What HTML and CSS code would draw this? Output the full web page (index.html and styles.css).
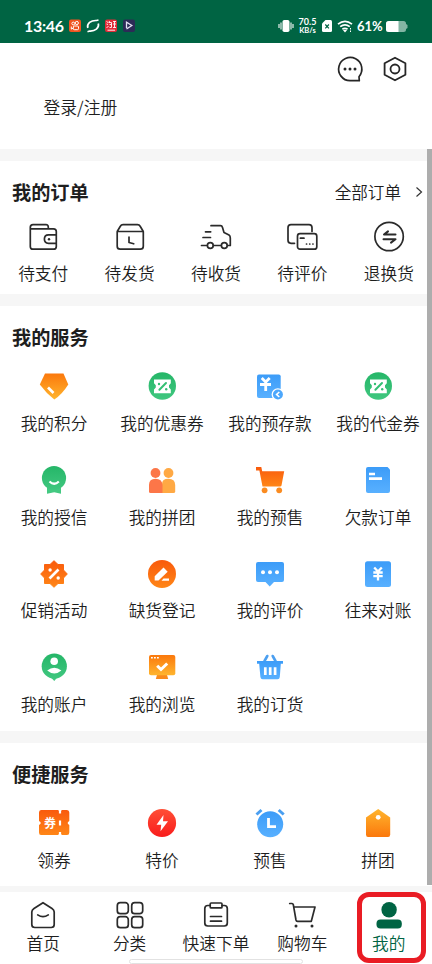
FILE: index.html
```html
<!DOCTYPE html>
<html lang="zh-CN">
<head>
<meta charset="utf-8">
<meta name="viewport" content="width=device-width, initial-scale=1">
<title>我的</title>
<link rel="stylesheet" href="styles.css">
</head>
<body>
<svg class="defs" aria-hidden="true">
  <defs>
    <linearGradient id="orange" x1="0" y1="0" x2="0" y2="1"><stop offset="0" stop-color="#f95a0c"/><stop offset="1" stop-color="#ff8617"/></linearGradient>
    <linearGradient id="amber" x1="0" y1="0" x2="0" y2="1"><stop offset="0" stop-color="#fb780c"/><stop offset="1" stop-color="#ffb52e"/></linearGradient>
    <linearGradient id="tag" x1="0" y1="0" x2="0" y2="1"><stop offset="0" stop-color="#ffb52e"/><stop offset="1" stop-color="#fb780c"/></linearGradient>
    <linearGradient id="blue" x1="0" y1="0" x2="0" y2="1"><stop offset="0" stop-color="#3c9cf8"/><stop offset="1" stop-color="#58b0ff"/></linearGradient>
    <linearGradient id="green" x1="0" y1="0" x2="0" y2="1"><stop offset="0" stop-color="#25b668"/><stop offset="1" stop-color="#40c77f"/></linearGradient>
    <linearGradient id="red" x1="0" y1="0" x2="0" y2="1"><stop offset="0" stop-color="#ff4f36"/><stop offset="1" stop-color="#f91c1c"/></linearGradient>
    <symbol id="coupon" viewBox="-18 -18 36 36">
      <circle cx=".3" cy="0" r="13.7" fill="url(#green)"/>
      <path d="M-8-6.5H8.800V-2.700L7-.8V1.500L8.800 3.400V7.300H-8V3.400L-6.200 1.500V-.8L-8-2.700Z" fill="#fff"/>
      <path d="M-2.600 3.800 4-3" stroke="#35bf74" stroke-width="2" stroke-linecap="round"/>
      <circle cx="-3" cy="-2" r="1.200" fill="#35bf74"/><circle cx="4.200" cy="3.200" r="1.200" fill="#35bf74"/>
    </symbol>
  </defs>
</svg>
<div class="screen">
  <header class="status">
    <div class="status-left">
      <span class="clock">13:46</span>
      <svg class="notices" viewBox="0 0 66 14">
        <rect width="12" height="12.5" y=".5" rx="2" fill="#ef5420"/>
        <g fill="none" stroke="#fff" stroke-width="1"><circle cx="4.3" cy="4.5" r="1.4"/><circle cx="7.8" cy="4" r="1.6"/><rect x="4.3" y="7" width="5.2" height="3.7" rx="1"/><path d="M2.3 7.5v2.6l2-1"/></g>
        <path d="M18.800 9C17.500 4.500 22 1.200 27.500 1.500L29.500 1M29.300 4.500C30.500 9 26 12.400 20.500 12L18.500 12.700" fill="none" stroke="#fff" stroke-width="1.700"/>
        <rect x="36" y=".5" width="12" height="12.5" rx="2" fill="#e12c39"/>
        <path d="M37.500 2.500 39 3.500M37.500 5 39 5.500M37.500 9 39.500 7M40.500 2 39.800 4M40 3.500H42.500V8.500H40.500M40.500 5.500H42.500M44 2.500H47M44 5H47M45.500 2V8.500M44 8.500H47M38.500 11.200H46" fill="none" stroke="#fff" stroke-width=".9"/>
        <rect x="54" y=".5" width="12" height="12.5" rx="2" fill="#2c2b57"/>
        <path d="M57.500 9V3.200L62.800 6.500 57.500 10" fill="none" stroke="#e4e2f4" stroke-width="1.300"/>
      </svg>
    </div>
    <div class="status-right">
      <svg class="vibrate" viewBox="0 0 16 14"><path d="M1 5v4M3 3.500v7M15 5v4M13 3.500v7" stroke="#fff" stroke-width="1.100"/><rect x="4.500" y="1" width="7" height="12" rx="1.800" fill="#fff"/></svg>
      <span class="speed"><span>70.5</span><span class="unit">KB/s</span></span>
      <svg class="sim" viewBox="0 0 10 12"><path d="M3.500 0H8.500Q10 0 10 1.500V10.500Q10 12 8.500 12H1.500Q0 12 0 10.500V3.500Z" fill="#fff"/><path d="m3.300 4.500 3.600 3.800m0-3.800L3.300 8.300" stroke="#006443" stroke-width="1.200"/></svg>
      <svg class="wifi" viewBox="0 0 16 13"><g fill="none" stroke="#fff" stroke-width="1.700"><path d="M1 4.200Q8-1.500 15 4.200M3.200 6.700Q8 3 12.800 6.700M5.400 9.200Q8 7.300 10.500 9.200"/></g><path d="m6 10.200 2 2.300 2-2.300Q8 9 6 10.200Z" fill="#fff"/><path d="M13.500 8v4" stroke="#fff" stroke-dasharray="1.500 1"/></svg>
      <span class="percent">61%</span>
      <svg class="battery" viewBox="0 0 22 11"><path d="M3 0H17.500Q20 0 20 2.500V3L21.500 4V7L20 8V8.500Q20 11 17.500 11H3Q0 11 0 8.500V2.500Q0 0 3 0Z" fill="#83b6a4"/><path d="M12.500 0V11H3Q0 11 0 8.500V2.500Q0 0 3 0Z" fill="#fff"/></svg>
    </div>
  </header>

  <section class="account">
    <div class="tools">
      <svg class="tool" viewBox="-14 -14 28 28" fill="none" stroke="#262626" stroke-width="1.700"><path d="M9 7.700A11.600 11.600 0 1 0 0 11.700H9.300Z" stroke-linejoin="round"/><g fill="#262626" stroke="none"><circle cx="-5" cy="0" r="1.500"/><circle r="1.500"/><circle cx="5" r="1.500"/></g></svg>
      <svg class="tool" viewBox="-14 -14 28 28" fill="none" stroke="#262626" stroke-width="1.800" stroke-linejoin="round"><path d="M0-11.300 10.400-5.700V5.700L0 11.300-10.400 5.700V-5.700Z"/><circle r="4.500"/></svg>
    </div>
    <a class="login">登录/注册</a>
  </section>

  <section class="orders">
    <div class="heading"><h2>我的订单</h2><a class="all">全部订单<svg viewBox="0 0 8 12"><path d="m1.500 1.500 5 4.500-5 4.500" fill="none" stroke="#333" stroke-width="1.200"/></svg></a></div>
    <div class="order-row">
      <a class="item"><svg class="icon line" viewBox="-18 -18 36 36"><path d="M-12.700-8.200V-9.500Q-12.700-12.300-10-12.300H3Q5.300-12.300 5.300-10V-8M-12.700-8.200H10.500Q13.300-8.200 13.300-5.400V9.400Q13.300 12.200 10.500 12.200H-10Q-12.700 12.200-12.700 9.400V-8.200M13.300-2.200H5.500Q1.400-2.200 1.400 2.100T5.500 6.400H13.300"/><circle cx="6" cy="2.200" r="1.200" class="dot"/></svg><span>待支付</span></a>
      <a class="item"><svg class="icon line" viewBox="-18 -18 36 36"><path d="M-12.800-5.500H13.300V9.200Q13.300 12.200 10.300 12.200H-9.800Q-12.800 12.200-12.800 9.200ZM-12.800-5.500-9.500-11Q-8.800-12.300-7-12.300H7.500Q9.300-12.300 10-11L13.300-5.500M-1 0V5.500L3.700 6.800"/></svg><span>待发货</span></a>
      <a class="item"><svg class="icon line" viewBox="-18 -18 36 36"><path d="M-5-11.300H4.500Q6-11.300 6.500-9.500L8-4.500 13-2Q14.300-1.200 14.300 1V8.500H11.700M-10.500-5.200H-5.300M-13 .5H-5.500M-14.500 8.500H-9M-2.500 8.500H5"/><circle cx="-5.700" cy="8.500" r="2.900"/><circle cx="8.300" cy="8.500" r="2.900"/></svg><span>待收货</span></a>
      <a class="item"><svg class="icon line" viewBox="-18 -18 36 36"><path d="M-7.500 6.300H-11Q-14 6.300-14 3.300V-9.300Q-14-12.300-11-12.300H7Q10-12.300 10-9.300V-5.500"/><rect x="-4.500" y="-3.300" width="19.300" height="15.500" rx="2.500"/><path d="M-1.600 1.200H2"/><path d="M4.500 7h.1M7.700 7h.1M10.900 7h.1"/></svg><span>待评价</span></a>
      <a class="item"><svg class="icon line" viewBox="-18 -18 36 36"><circle cx=".1" cy="-.5" r="14.200"/><path d="M6.500-2.400H-5L-1-5.600M-5.500 2.300H6.500L2 5.600" stroke-width="2"/></svg><span>退换货</span></a>
    </div>
  </section>

  <section class="services">
    <div class="heading"><h2>我的服务</h2></div>
    <div class="service-grid">
      <a class="item"><svg class="icon" viewBox="-18 -18 36 36"><path d="M-9-12.500H9.500L14.300-1.500Q8 8.500 .3 13.500-8 7-14.200-1.500Z" fill="url(#amber)"/><path d="m-6 1.500 5.500 5.500" stroke="#fff" stroke-width="2.700"/></svg><span>我的积分</span></a>
      <a class="item"><svg class="icon"><use href="#coupon"/></svg><span>我的优惠券</span></a>
      <a class="item"><svg class="icon" viewBox="-18 -18 36 36"><rect x="-13" y="-11.500" width="23.700" height="23.500" rx="2" fill="url(#blue)"/><path d="m-8.300-8 4 4 4-4M-4.300-4V5M-10-1.500H1" stroke="#fff" stroke-width="2.800" fill="none"/><circle cx="7.900" cy="8.500" r="6.300" fill="#fff"/><circle cx="7.900" cy="8.500" r="5" fill="#4ca7fc"/><path d="M9.300 6 6.600 8.500 9.300 11" fill="none" stroke="#fff" stroke-width="1.600"/></svg><span>我的预存款</span></a>
      <a class="item"><svg class="icon"><use href="#coupon"/></svg><span>我的代金券</span></a>

      <a class="item"><svg class="icon" viewBox="-18 -18 36 36"><path d="M-7 7V13.800L.2 12.300 7 13.800V7Z" fill="#43c981"/><circle cy="-2" r="12.100" fill="url(#green)"/><path d="M-4.500 1.500Q.2 6 4.800 1.500" fill="none" stroke="#fff" stroke-width="2.200"/></svg><span>我的授信</span></a>
      <a class="item"><svg class="icon" viewBox="-18 -18 36 36"><g fill="#ffa944"><circle cx="6.500" cy="-7" r="4.900"/><path d="M0 13V4Q0-1.300 6.500-1.300T13.200 5V11.500Q13.200 13 11.500 13Z"/></g><g fill="#fc7648"><circle cx="-6.500" cy="-7" r="4.900"/><path d="M-13 11.500V5Q-13-1.300-6.500-1.300T.5 5V13H-11.500Q-13 13-13 11.500Z"/></g></svg><span>我的拼团</span></a>
      <a class="item"><svg class="icon" viewBox="-18 -18 36 36"><path d="M-14-13H-8.700L-7.800-8.800H14.200L11.500 5.500Q11.300 6.500 10 6.500H-7.500L-10.600-9.500H-14Z" fill="url(#orange)"/><circle cx="-5.400" cy="10.300" r="2.900" fill="#fa8b20"/><circle cx="9.200" cy="10.300" r="2.900" fill="#fa8b20"/></svg><span>我的预售</span></a>
      <a class="item"><svg class="icon" viewBox="-18 -18 36 36"><path d="M-10-13H9.500L12-10.500V11Q12 13 10 13H-10Q-12 13-12 11V-11Q-12-13-10-13Z" fill="url(#blue)"/><path d="M-9-6H-3M-9-1.400H4" stroke="#fff" stroke-width="2.600"/></svg><span>欠款订单</span></a>

      <a class="item"><svg class="icon" viewBox="-18 -18 36 36"><path d="M0-13.300 4-9.500H9.500V-4L13.300 0 9.500 4V9.500H4L0 13.300-4 9.500H-9.500V4L-13.300 0-9.500-4V-9.500H-4Z" fill="url(#orange)" stroke="url(#orange)" stroke-linejoin="round"/><path d="M-4.500 4.500 4.500-4.500" stroke="#fff" stroke-width="2.600"/><circle cx="-3.900" cy="-4" r="1.700" fill="#fff"/><circle cx="4.200" cy="4" r="1.700" fill="#fff"/></svg><span>促销活动</span></a>
      <a class="item"><svg class="icon" viewBox="-18 -18 36 36"><circle r="14" fill="url(#orange)"/><path d="M-7.300 2.200 1.500-6.500 5.700-2.300-3.500 6.500H-7.300Z" fill="#fff"/><path d="M-.5 6.700 1.500 4.500H7V6.700Z" fill="#fff"/></svg><span>缺货登记</span></a>
      <a class="item"><svg class="icon" viewBox="-18 -18 36 36"><path d="M-12-12H12Q14-12 14-10V6Q14 8 12 8H4L-.3 12.500-4.500 8H-12Q-14 8-14 6V-10Q-14-12-12-12Z" fill="url(#blue)"/><g fill="#fff"><circle cx="-7" cy="-1.800" r="2"/><circle cy="-1.800" r="2"/><circle cx="7" cy="-1.800" r="2"/></g></svg><span>我的评价</span></a>
      <a class="item"><svg class="icon" viewBox="-18 -18 36 36"><rect x="-13" y="-12.700" width="26" height="25.700" rx="2.500" fill="url(#blue)"/><path d="m-3.800-6.500 3.800 4 3.800-4M0-2.500V6.500M-4.700-1.500H4.700M-4.700 2.200H4.700" fill="none" stroke="#fff" stroke-width="2.300"/></svg><span>往来对账</span></a>

      <a class="item"><svg class="icon" viewBox="-18 -18 36 36"><path d="M-4 9.500H4L.3 14Z" fill="#43c981"/><circle cx=".3" cy="-.8" r="12.600" fill="url(#green)"/><circle cx=".2" cy="-5.800" r="3.800" fill="#fff"/><path d="M-6.800 3.500Q.2-2 7.400 3.500 .3 9.500-6.800 3.500Z" fill="#fff"/></svg><span>我的账户</span></a>
      <a class="item"><svg class="icon" viewBox="-18 -18 36 36"><path d="M-5 8H5L6.200 12H-6.200Z" fill="#fa8a1c"/><rect x="-13" y="-12" width="26.300" height="20.300" rx="2" fill="url(#amber)"/><path d="M-11-9.300H-3" stroke="#fff" stroke-width="1.600" stroke-dasharray="1.800 1.200"/><path d="M-4.800-1.300-1 2.500 5.200-3.500" fill="none" stroke="#fff" stroke-width="3"/></svg><span>我的浏览</span></a>
      <a class="item"><svg class="icon" viewBox="-18 -18 36 36"><path d="m-5.500-6 2.800-5M5.500-6 2.700-11" stroke="#4b9ff0" stroke-width="2.600" stroke-linecap="round"/><path d="M-13-6H13V-3.300H10.800L9.800 10Q9.600 12.300 7.500 12.300H-7.300Q-9.400 12.300-9.600 10L-10.800-3.300H-13Z" fill="url(#blue)"/><path d="M-4.700 .3V8M.2 .3V8M5.100 .3V8" stroke="#fff" stroke-width="2.700"/></svg><span>我的订货</span></a>
    </div>
  </section>

  <section class="quick">
    <div class="heading"><h2>便捷服务</h2></div>
    <div class="service-grid">
      <a class="item"><svg class="icon" viewBox="-18 -18 36 36"><path d="M-13-13H4.200Q6-9.500 7.800-13H13Q15.300-13 15.300-10.500V-2Q12 0 15.300 2V9.500Q15.300 12 13 12H7.800Q6 8.500 4.200 12H-13Q-15 12-15 9.500V2Q-11.500 0-15-2V-10.500Q-15-13-13-13Z" fill="url(#orange)"/><path d="M6-12V-9.500M6-2.500V2.500M6 9V12" stroke="#fff" stroke-width="2.200"/><text x="-4" y="4.700" class="coupon-text">券</text></svg><span>领券</span></a>
      <a class="item"><svg class="icon" viewBox="-18 -18 36 36"><circle r="14.100" fill="url(#red)"/><path d="M1.500-8-5.500 1.800H-.8L-1.500 8.300 6-1.700H1Z" fill="#fff"/></svg><span>特价</span></a>
      <a class="item"><svg class="icon" viewBox="-18 -18 36 36"><circle cx=".2" cy="1.300" r="13" fill="url(#blue)"/><path d="m-13.500-8.500 5-4.500M13.700-8.500l-5-4.500" stroke="#4b9ff0" stroke-width="3"/><path d="M-1.500-5V3.600H6" fill="none" stroke="#fff" stroke-width="2.800"/></svg><span>预售</span></a>
      <a class="item"><svg class="icon" viewBox="-18 -18 36 36"><path d="M.2-14 12.200-5.500V11.500Q12.200 14 10 14H-10Q-12 14-12 11.500V-5.500Z" fill="url(#tag)"/><circle cx=".2" cy="-5.700" r="2.400" fill="#fff"/></svg><span>拼团</span></a>
    </div>
  </section>

  <nav class="tabs">
    <a class="tab"><svg class="icon line" viewBox="-18 -18 36 36"><path d="M0-12.300 9-6.500Q11.200-5 11.200-3V9.500Q11.200 12.500 8.200 12.500H-8.200Q-11.200 12.500-11.200 9.500V-3Q-11.200-5-9-6.500ZM-5.300-.1Q0 3.500 5.300-.1"/></svg><span>首页</span></a>
    <a class="tab"><svg class="icon line" viewBox="-18 -18 36 36"><rect x="-12.700" y="-12.300" width="11" height="11" rx="3"/><rect x="1.700" y="-12.300" width="11" height="11" rx="3"/><rect x="-12.700" y="1.700" width="11" height="11" rx="3"/><rect x="1.700" y="1.700" width="11" height="11" rx="3"/></svg><span>分类</span></a>
    <a class="tab"><svg class="icon line" viewBox="-18 -18 36 36"><path d="M-5.800-9.500H-8.200Q-11.200-9.500-11.200-6.500V8Q-11.200 11-8.200 11H8.300Q11.300 11 11.300 8V-6.500Q11.300-9.500 8.300-9.500H6M-5.500 1.500H5.500M-5.500 6.200H5.500"/><rect x="-5.800" y="-12" width="11.800" height="4.900" rx="1"/></svg><span>快速下单</span></a>
    <a class="tab"><svg class="icon line" viewBox="-18 -18 36 36"><path d="M-12.300-11.500H-10Q-9-11.500-8.700-10.300L-6 5Q-5.700 6.300-4.500 6.300H9.300L13-8H-8"/><circle cx="-6" cy="11" r="1.500" class="dot"/><circle cx="10" cy="11" r="1.500" class="dot"/></svg><span>购物车</span></a>
    <a class="tab active"><svg class="icon" viewBox="-18 -18 36 36" fill="currentColor"><circle cx=".1" cy="-5.300" r="7.700"/><rect x="-12.500" y="4.500" width="25.300" height="9" rx="4"/></svg><span>我的</span></a>
  </nav>
  <div class="scrollbar"></div>
  <div class="home-bar"></div>
  <div class="marker"></div>
</div>
</body>
</html>
```
FILE: styles.css
```css
* { box-sizing: border-box; }
body { margin: 0; background: #fff; color: #1e1e1e; font-family: "Noto Sans CJK SC", sans-serif; font-weight: 350; }
.defs { position: absolute; width: 0; height: 0; }
.screen { position: relative; width: 432px; height: 964px; overflow: hidden; display: flex; flex-direction: column; background: #f6f6f6; }
.screen > section { background: #fff; flex: none; }

.status { height: 43px; flex: none; background: #006443; color: #fff; display: flex; justify-content: space-between; padding: 9px 24px 0; }
.status-left, .status-right { display: flex; align-items: center; height: 34px; }
.clock { font: 700 16px/34px Lato, sans-serif; letter-spacing: -.3px; width: 45px; white-space: nowrap; }
.notices { width: 66px; height: 14px; }
.vibrate { width: 16px; height: 14px; margin-right: 3px; }
.speed { display: flex; flex-direction: column; align-items: center; justify-content: center; width: 21px; font: 700 9px/8px Lato, sans-serif; margin-right: 4px; }
.speed .unit { font-size: 7.500px; line-height: 9px; }
.sim { width: 10px; height: 12px; margin-right: 5px; }
.wifi { width: 16px; height: 13px; margin-right: 4px; }
.percent { width: 25px; font: 700 13px/34px Lato, sans-serif; margin-right: 4px; }
.battery { width: 22px; height: 11px; }

.account { height: 106px; padding: 12px 23px 0 43.500px; margin-bottom: 12px; }
.tools { display: flex; justify-content: flex-end; gap: 17px; height: 28px; }
.tool { width: 28px; height: 28px; }
.login { display: block; font-size: 16.800px; line-height: 24px; margin-top: 12px; }

.heading { display: flex; align-items: center; justify-content: space-between; height: 64px; padding: 0 9px 2px 12px; }
h2 { margin: 0; font-size: 19.200px; line-height: 28px; font-weight: 700; }
.all { display: flex; align-items: center; gap: 14px; font-size: 16.600px; line-height: 24px; }
.all svg { width: 8px; height: 12px; }

.item, .tab { display: flex; flex-direction: column; align-items: center; }
.item span, .tab span { font-size: 16.700px; line-height: 24px; white-space: nowrap; }
.icon { width: 36px; height: 36px; overflow: visible; }
.line { fill: none; stroke: #2b2b2b; stroke-width: 1.700; stroke-linejoin: round; stroke-linecap: round; }
.dot { fill: #2b2b2b; stroke: none; }

.orders { height: 133px; margin-bottom: 12px; }
.order-row { display: grid; grid-template-columns: repeat(5, 1fr); margin-top: -6px; }
.order-row .item { gap: 6px; }

.services { height: 425px; margin-bottom: 12px; }
.service-grid { display: grid; grid-template-columns: repeat(4, 1fr); grid-auto-rows: 93.700px; }
.service-grid .item { gap: 6.500px; }
.services .service-grid { margin-top: -1.700px; }
.quick { height: 143px; margin-bottom: 6px; overflow: hidden; }
.quick .service-grid { margin-top: -2px; }
.coupon-text { font-size: 12px; font-weight: 700; fill: #fff; text-anchor: middle; }

.tabs { height: 72px; flex: none; display: grid; grid-template-columns: repeat(5, 1fr); background: #fff; padding-top: 5px; }
.tab span { margin-top: -2px; }
.tab.active { color: #006443; }

.scrollbar { position: absolute; right: 0; top: 149px; width: 5px; height: 736px; background: #adadad; }
.home-bar { position: absolute; left: 129px; top: 959px; width: 174px; height: 5px; border: 1px solid #e2e2e2; border-radius: 3px; background: #fff; }
.marker { position: absolute; left: 357px; top: 892px; width: 69px; height: 71px; border: 5px solid #e91c24; border-radius: 12px; }
```
